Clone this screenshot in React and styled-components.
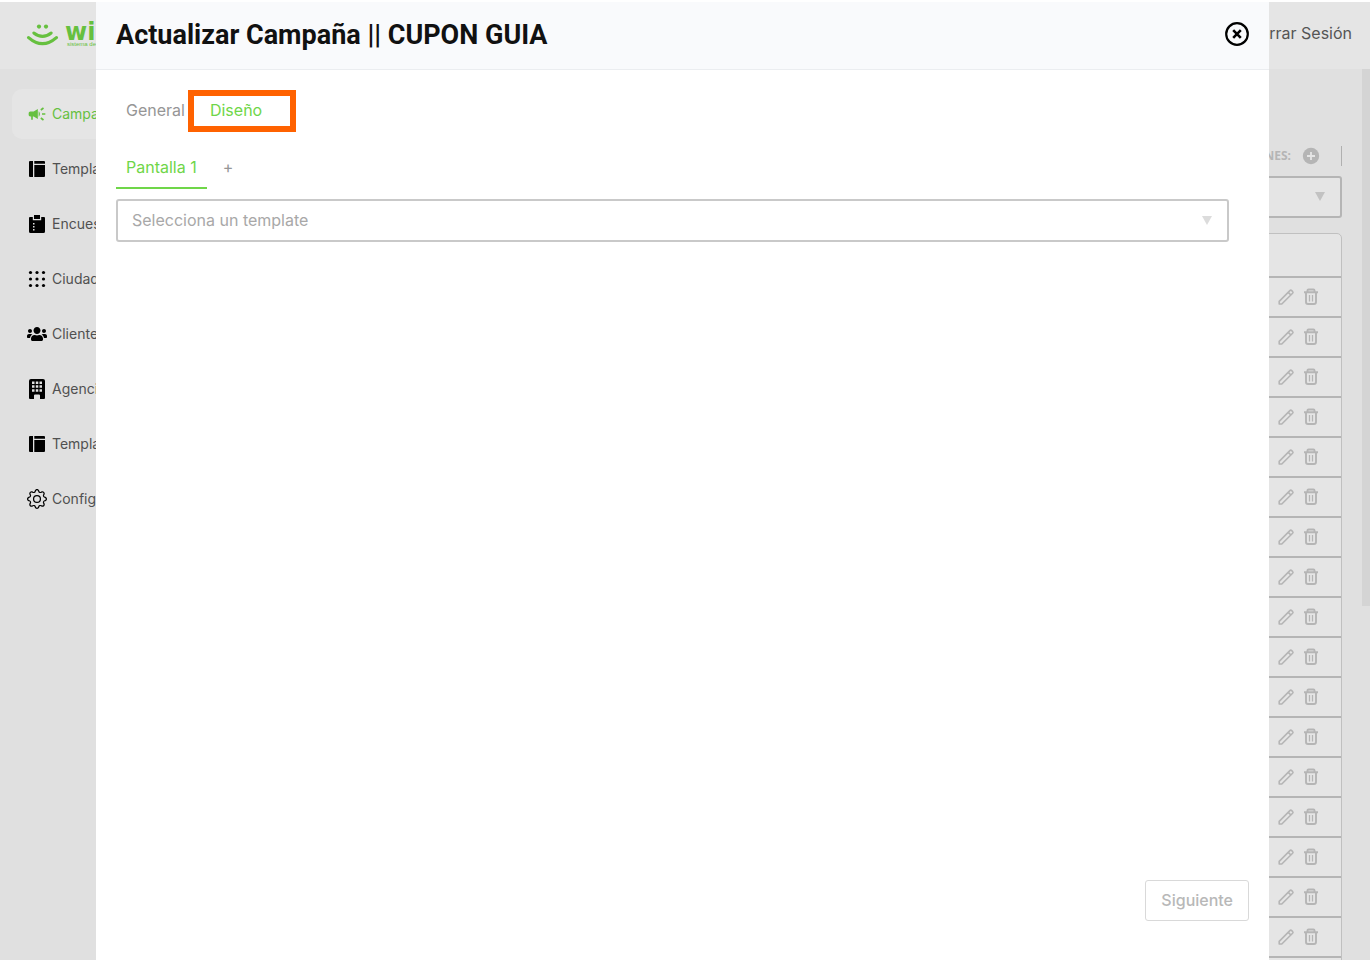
import React from "react";
import styled, { createGlobalStyle } from "styled-components";
import { MdCampaign } from "react-icons/md";
import { FaUsers } from "react-icons/fa";
import { BsGear } from "react-icons/bs";

const GlobalStyle = createGlobalStyle`
  * { box-sizing: border-box; }
  body { margin: 0; background: #fff; font-family: Inter, "Liberation Sans", sans-serif; }
  button, select { font-family: inherit; }
  button { margin: 0; padding: 0; border: 0; background: none; cursor: pointer; color: inherit; }
`;

const Page = styled.div`
  height: 100vh;
  padding: 2px 0 3px;
`;

const Shell = styled.div`
  position: relative;
  display: flex;
  flex-direction: column;
  height: 100%;
  overflow: hidden;
  background: #e0e0e0;
`;

const TopBar = styled.header`
  flex: none;
  display: flex;
  align-items: center;
  justify-content: space-between;
  height: 67px;
  padding: 0 18px 2px 26px;
  background: #e5e5e5;
`;

const Brand = styled.a`
  display: flex;
  gap: 6px;
  color: #66c03f;
  text-decoration: none;
`;

const BrandText = styled.span`
  display: flex;
  flex-direction: column;
  white-space: nowrap;
`;

const BrandName = styled.span`
  font: 700 24px/18px "DejaVu Sans", sans-serif;
`;

const BrandTag = styled.span`
  padding-left: 2px;
  font: 400 6px/6px "Liberation Sans", sans-serif;
`;

const Logout = styled.button`
  padding-bottom: 4px;
  color: #555;
  font-size: 16px;
  line-height: 20px;
`;

const Columns = styled.div`
  flex: 1;
  display: flex;
  min-height: 0;
`;

const Sidebar = styled.nav`
  flex: none;
  display: flex;
  flex-direction: column;
  gap: 5px;
  width: 240px;
  padding: 20px 12px;
`;

const NavLink = styled.a`
  display: flex;
  align-items: center;
  gap: 5px;
  height: 50px;
  padding: 0 15px;
  border-radius: 10px;
  font-size: 14px;
  text-decoration: none;
  color: ${(p) => (p.$active ? "#66c03f" : "#505050")};
  background: ${(p) => (p.$active ? "#e5e5e5" : "transparent")};

  svg { flex: none; color: ${(p) => (p.$active ? "#66c03f" : "#000")}; }
`;

const NavLabel = styled.span`
  padding-bottom: 2px;
`;

const Content = styled.main`
  flex: 1;
  display: flex;
  flex-direction: column;
  min-width: 0;
  padding: 77px 20px 0;
  overflow: hidden;
`;

const ActionsHeading = styled.div`
  flex: none;
  display: flex;
  align-items: center;
  justify-content: flex-end;
  gap: 11px;
  height: 20px;
  margin-bottom: 10px;
  padding-right: 21px;
  border-right: 1px solid #b0b0b0;
  color: #b5b5b5;
  font: 700 12px/20px "Noto Sans", sans-serif;
`;

const IconButton = styled.button`
  display: flex;
`;

const SelectBox = styled.div`
  flex: none;
  display: flex;
  align-items: center;
  height: ${(p) => (p.$muted ? "42px" : "43px")};
  padding: 0 15px 1px 0;
  border: 2px solid ${(p) => (p.$muted ? "#b5b5b5" : "#c9c9c9")};
  border-radius: 3px;
  background: ${(p) => (p.$muted ? "#e5e5e5" : "#fff")};
  color: ${(p) => (p.$muted ? "#c2c2c2" : "#dcdcdc")};
`;

const Select = styled.select`
  flex: 1;
  appearance: none;
  height: 100%;
  padding: 0 14px 1px;
  border: 0;
  background: transparent;
  color: #a8a8a8;
  font-size: 16px;
`;

const TableCard = styled.div`
  flex: none;
  margin-top: 15px;
  border: 1px solid #c0c0c0;
  border-radius: 5px;
  background: #e5e5e5;
`;

const Table = styled.table`
  width: 100%;
  border-spacing: 0;

  th { height: 42px; padding: 0; }
  td { height: 40px; padding: 0 22px 0 0; border-top: 2px solid #b5b5b5; }
`;

const RowActions = styled.div`
  display: flex;
  justify-content: flex-end;
  gap: 8px;
  color: #b5b5b5;
`;

const ScrollTrack = styled.div`
  flex: none;
  width: 8px;
`;

const ScrollThumb = styled.div`
  height: 60.3%;
  background: #d4d4d4;
`;

const Modal = styled.section`
  position: absolute;
  top: 0;
  bottom: 0;
  left: 96px;
  right: 101px;
  display: flex;
  flex-direction: column;
  background: #fff;
`;

const ModalHeader = styled.header`
  flex: none;
  display: flex;
  align-items: center;
  justify-content: space-between;
  height: 68px;
  padding: 0 19px 3px 20px;
  border-bottom: 1px solid #ebedf0;
  background: #f9fafc;
`;

const Title = styled.h1`
  margin: 0;
  padding-top: 2px;
  color: #111;
  font: 700 27px/40px Roboto, sans-serif;
`;

const ModalBody = styled.div`
  flex: 1;
  padding: 20px 40px 0 20px;
`;

const Tabs = styled.div`
  display: flex;
  gap: ${(p) => (p.$main ? "5px" : "6px")};
  margin-bottom: ${(p) => (p.$main ? "15px" : "10px")};
`;

const Tab = styled.button`
  position: relative;
  height: 41px;
  padding: 0 10px 2px;
  color: ${(p) => (p.$active ? "#6fd649" : "#969696")};
  font-size: 16px;
`;

const ScreenTab = styled(Tab)`
  height: 43px;
  padding: 0 10px;
  border-bottom: 2px solid ${(p) => (p.$active ? "#6fd649" : "transparent")};
`;

const Highlight = styled.span`
  position: absolute;
  inset: 0 -24px -1px -12px;
  border: 6px solid #ff6200;
`;

const ModalFooter = styled.footer`
  flex: none;
  display: flex;
  justify-content: flex-end;
  padding: 0 20px 39px;
`;

const NextButton = styled.button`
  height: 41px;
  padding: 0 15px 2px;
  border: 1px solid #d9d9d9;
  border-radius: 3px;
  color: #b8b8b8;
  font-size: 16px;
  font-weight: 500;
`;

const Smile = () => (
  <svg width="33" height="24" viewBox="0 0 33 24" fill="none" stroke="currentColor" strokeLinecap="round" aria-hidden="true">
    <circle cx="13" cy="3.6" r="2.1" fill="currentColor" stroke="none" />
    <circle cx="20" cy="3.6" r="2.1" fill="currentColor" stroke="none" />
    <path d="M7.800 10Q16.500 16.800 25.200 10" strokeWidth="3" />
    <path d="M2.600 14.600Q16.500 26.800 30.400 14.600" strokeWidth="3.200" />
  </svg>
);

const TemplateIcon = () => (
  <svg width="20" height="20" viewBox="0 0 20 20" fill="currentColor" aria-hidden="true">
    <path d="M3 2h3v16H3a1 1 0 0 1-1-1V3a1 1 0 0 1 1-1ZM7.300 2H17a1 1 0 0 1 1 1v1.700H7.300ZM7.300 6H18v11a1 1 0 0 1-1 1H7.300Z" />
  </svg>
);

const ClipboardIcon = () => (
  <svg width="20" height="20" viewBox="0 0 20 20" fill="currentColor" aria-hidden="true">
    <path d="M7 1h6v4H7Z" />
    <path fillRule="evenodd" d="M3 3h2.800v3.200h8.400V3H17a1 1 0 0 1 1 1v13.500a1.500 1.500 0 0 1-1.500 1.500h-13A1.500 1.500 0 0 1 2 17.500V4a1 1 0 0 1 1-1Zm3 6v1.500h1.500V9Zm0 3v1.500h1.500V12Zm0 3v1.500h1.500V15Z" />
  </svg>
);

const DotsIcon = () => (
  <svg width="20" height="20" viewBox="0 0 20 20" fill="currentColor" aria-hidden="true">
    {[3.5, 10, 16.5].map((y) => [3.5, 10, 16.5].map((x) => <circle key={`${x}-${y}`} cx={x} cy={y} r="1.6" />))}
  </svg>
);

const BuildingIcon = () => (
  <svg width="20" height="20" viewBox="0 0 20 20" fill="currentColor" aria-hidden="true">
    <path fillRule="evenodd" d="M4 0h12a2 2 0 0 1 2 2v17a1 1 0 0 1-1 1h-4v-3.500a1 1 0 0 0-1-1H8a1 1 0 0 0-1 1V20H3a1 1 0 0 1-1-1V2a2 2 0 0 1 2-2ZM5 2.500V5h2.500V2.500Zm3.800 0V5h2.500V2.500Zm3.700 0V5H15V2.500ZM5 6.300v2.500h2.500V6.300Zm3.800 0v2.500h2.500V6.300Zm3.700 0v2.500H15V6.300ZM5 10.200v2.500h2.500v-2.500Zm3.800 0v2.500h2.500v-2.500Zm3.700 0v2.500H15v-2.500Z" />
  </svg>
);

const PlusCircle = () => (
  <svg width="18" height="18" viewBox="0 0 18 18" aria-hidden="true">
    <circle cx="9" cy="9" r="8.200" fill="#b5b5b5" />
    <path d="M9 5v8M5 9h8" stroke="#e5e5e5" strokeWidth="1.800" />
  </svg>
);

const Arrow = () => (
  <svg width="10" height="9" viewBox="0 0 10 9" fill="currentColor" aria-hidden="true">
    <path d="M0 0h10L5 9Z" />
  </svg>
);

const PencilIcon = () => (
  <svg width="18" height="18" viewBox="0 0 18 18" fill="none" stroke="currentColor" strokeWidth="1.600" strokeLinejoin="round" aria-hidden="true">
    <path d="M2.200 16v-2.600L12.900 2.600a1.300 1.300 0 0 1 1.800 0l.9.900a1.300 1.300 0 0 1 0 1.800L4.800 16ZM11.300 4.400l2.600 2.600" />
  </svg>
);

const TrashIcon = () => (
  <svg width="16" height="18" viewBox="0 0 16 18" fill="none" stroke="currentColor" aria-hidden="true">
    <path d="M1 4.200h14M4.500 4V2.500A1 1 0 0 1 5.500 1.500h5a1 1 0 0 1 1 1V4M3 4v10A2 2 0 0 0 5 16h6a2 2 0 0 0 2-2V4" strokeWidth="1.900" />
    <path d="M6.500 7v6.500M9.500 7v6.500" strokeWidth="1.300" />
  </svg>
);

const CloseIcon = () => (
  <svg width="26" height="26" viewBox="0 0 26 26" fill="none" stroke="#000" aria-hidden="true">
    <circle cx="13" cy="13" r="10.800" strokeWidth="2.200" />
    <path d="M9.200 9.200l7.600 7.600M16.800 9.200l-7.600 7.600" strokeWidth="2.600" />
  </svg>
);

const NAV = [
  { label: "Campañas", icon: <MdCampaign size={20} />, active: true },
  { label: "Templates", icon: <TemplateIcon /> },
  { label: "Encuestas", icon: <ClipboardIcon /> },
  { label: "Ciudades", icon: <DotsIcon /> },
  { label: "Clientes", icon: <FaUsers size={20} /> },
  { label: "Agencias", icon: <BuildingIcon /> },
  { label: "Templates", icon: <TemplateIcon /> },
  { label: "Configuración", icon: <BsGear size={20} /> },
];

const ROWS = Array.from({ length: 18 }, (_, i) => i);

export default function App() {
  return (
    <Page>
      <GlobalStyle />
      <Shell>
        <TopBar>
          <Brand href="#">
            <Smile />
            <BrandText>
              <BrandName>wi</BrandName>
              <BrandTag>sistema de</BrandTag>
            </BrandText>
          </Brand>
          <Logout type="button">Cerrar Sesión</Logout>
        </TopBar>
        <Columns>
          <Sidebar>
            {NAV.map((item, i) => (
              <NavLink key={i} href="#" $active={item.active}>
                {item.icon}
                <NavLabel>{item.label}</NavLabel>
              </NavLink>
            ))}
          </Sidebar>
          <Content>
            <ActionsHeading>
              ACCIONES:
              <IconButton type="button" aria-label="Agregar"><PlusCircle /></IconButton>
            </ActionsHeading>
            <SelectBox $muted>
              <Select aria-label="Filtro" />
              <Arrow />
            </SelectBox>
            <TableCard>
              <Table>
                <thead><tr><th /></tr></thead>
                <tbody>
                  {ROWS.map((row) => (
                    <tr key={row}>
                      <td>
                        <RowActions>
                          <IconButton type="button" aria-label="Editar"><PencilIcon /></IconButton>
                          <IconButton type="button" aria-label="Eliminar"><TrashIcon /></IconButton>
                        </RowActions>
                      </td>
                    </tr>
                  ))}
                </tbody>
              </Table>
            </TableCard>
          </Content>
          <ScrollTrack><ScrollThumb /></ScrollTrack>
        </Columns>

        <Modal role="dialog" aria-labelledby="modal-title">
          <ModalHeader>
            <Title id="modal-title">Actualizar Campaña || CUPON GUIA</Title>
            <IconButton type="button" aria-label="Cerrar"><CloseIcon /></IconButton>
          </ModalHeader>
          <ModalBody>
            <Tabs $main>
              <Tab type="button">General</Tab>
              <Tab type="button" $active>Diseño<Highlight /></Tab>
            </Tabs>
            <Tabs>
              <ScreenTab type="button" $active>Pantalla 1</ScreenTab>
              <ScreenTab type="button">+</ScreenTab>
            </Tabs>
            <SelectBox>
              <Select aria-label="Template" defaultValue="">
                <option value="">Selecciona un template</option>
              </Select>
              <Arrow />
            </SelectBox>
          </ModalBody>
          <ModalFooter>
            <NextButton type="button">Siguiente</NextButton>
          </ModalFooter>
        </Modal>
      </Shell>
    </Page>
  );
}
